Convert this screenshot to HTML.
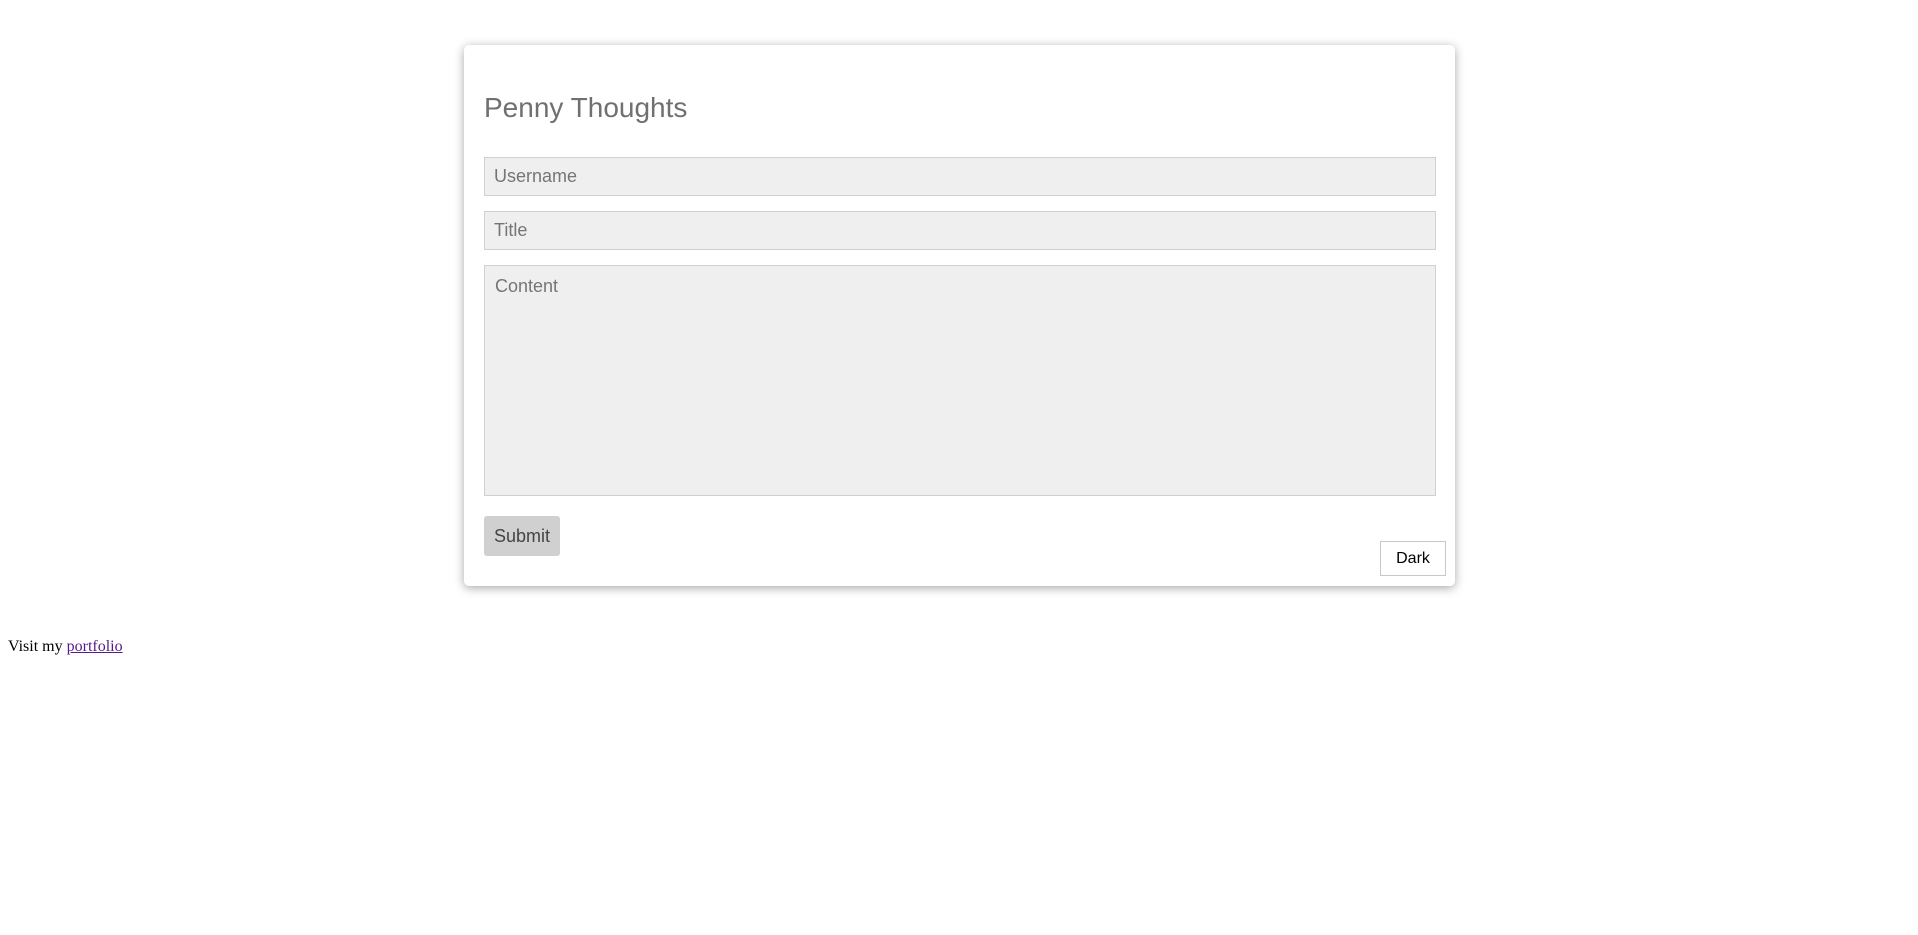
<!DOCTYPE html>
<html><head><style>
html,body{margin:0;padding:0;background:#fff;width:1918px;height:935px;overflow:hidden}
.card{position:absolute;left:464px;top:45px;width:991px;height:541px;background:#fff;border-radius:5px;box-shadow:0 2px 10px rgba(0,0,0,.35);font-family:"Liberation Sans",Arial,sans-serif}
h1{position:absolute;left:20px;top:43px;margin:0;font-weight:normal;font-size:28px;color:#707070;line-height:40px}
.in{position:absolute;left:20px;width:952px;background:#efefef;border:1px solid #d0d0d0;box-sizing:border-box;color:#757575;font-size:18px;padding-left:9px}
.sub{position:absolute;left:20px;top:471px;width:76px;height:40px;background:#d0d0d0;border-radius:3px;color:#444;font-size:18px;line-height:40px;text-align:center}
.dark{position:absolute;left:916px;top:496px;width:66px;height:35px;border:1px solid #c8c8c8;box-sizing:border-box;font-size:16px;line-height:33px;text-align:center;color:#000}
.foot{position:absolute;left:8px;top:638px;font-family:"Liberation Serif",serif;font-size:16px;color:#000}
.foot a{color:#551a8b;text-decoration:underline}
</style></head><body>
<div class="card">
<h1>Penny Thoughts</h1>
<div class="in" style="top:112px;height:39px;line-height:37px">Username</div>
<div class="in" style="top:166px;height:39px;line-height:37px">Title</div>
<div class="in" style="top:220px;height:231px;padding-top:10px;padding-left:10px">Content</div>
<div class="sub">Submit</div>
<div class="dark">Dark</div>
</div>
<div class="foot">Visit my <a>portfolio</a></div>
</body></html>
